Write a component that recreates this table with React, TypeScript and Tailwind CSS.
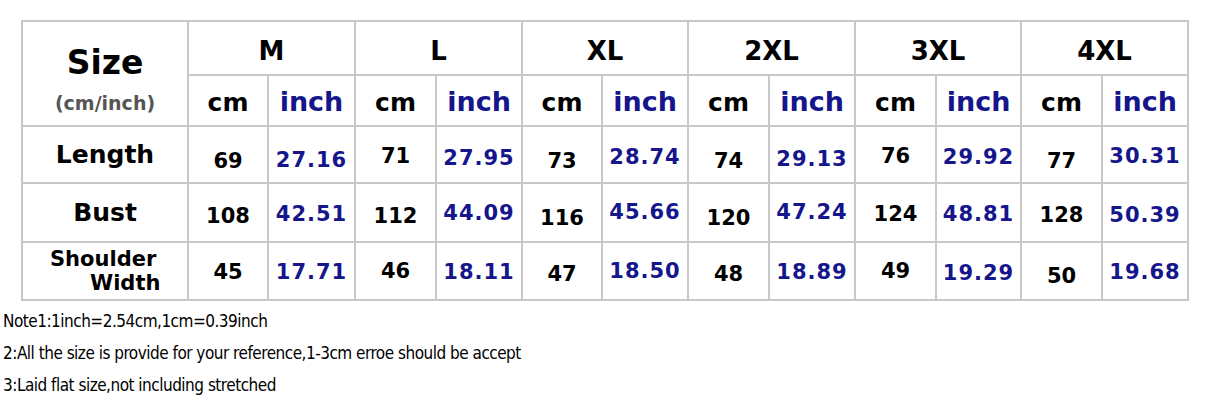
const sizes = ['M', 'L', 'XL', '2XL', '3XL', '4XL'];

// shift = how far the value sits below the cell middle in the picture
const rows = [
  {
    label: 'Length',
    cm: ['69', '71', '73', '74', '76', '77'],
    cmShift: [5, 0, 5, 5, 0, 5],
    inch: ['27.16', '27.95', '28.74', '29.13', '29.92', '30.31'],
    inchShift: [5, 3, 2, 4, 2, 1]
  },
  {
    label: 'Bust',
    cm: ['108', '112', '116', '120', '124', '128'],
    cmShift: [2, 2, 4, 4, 0, 1],
    inch: ['42.51', '44.09', '45.66', '47.24', '48.81', '50.39'],
    inchShift: [1, 0, -1, -1, 1, 2]
  },
  {
    label: 'Shoulder',
    cm: ['45', '46', '47', '48', '49', '50'],
    cmShift: [0, -1, 2, 2, -1, 4],
    inch: ['17.71', '18.11', '18.50', '18.89', '19.29', '19.68'],
    inchShift: [1, 1, 0, 1, 2, 1]
  }
];

const padCm: Record<number, string> = {
  [-1]: 'pt-[2px]',
  0: 'pt-[4px]',
  1: 'pt-[6px]',
  2: 'pt-[8px]',
  3: 'pt-[10px]',
  4: 'pt-[12px]',
  5: 'pt-[14px]'
};

const padInch: Record<number, string> = {
  [-1]: 'pt-[0px]',
  0: 'pt-[2px]',
  1: 'pt-[4px]',
  2: 'pt-[6px]',
  3: 'pt-[8px]',
  4: 'pt-[10px]',
  5: 'pt-[12px]'
};

const colWidths = [166, 80, 87, 81, 86, 80, 86, 81, 86, 81, 85, 81, 86];
const rowHeights = ['h-[57px]', 'h-[59px]', 'h-[58px]'];

const cell = 'border-2 border-[#c8c8c8] text-center align-middle p-0';

export default function App() {
  return (
    <div className="w-[1232px] h-[415px] bg-white overflow-hidden font-['DejaVu_Sans',sans-serif]">
      <div className="pt-[20px] pl-[21px]">
        <table className="border-collapse table-fixed w-[1168px]">
          <colgroup>
            {colWidths.map((w, i) => (
              <col key={i} style={{ width: w }} />
            ))}
          </colgroup>
          <thead>
            <tr className="h-[54px]">
              <th rowSpan={2} className={cell}>
                <div className="text-[33px] font-bold leading-none text-black pt-[12px]">Size</div>
                <div className="text-[19px] font-bold text-[#555] leading-none mt-[15px]">(cm/inch)</div>
              </th>
              {sizes.map((s) => (
                <th key={s} colSpan={2} className={`${cell} text-[26px] font-bold text-black pt-[6px]`}>
                  {s}
                </th>
              ))}
            </tr>
            <tr className="h-[51px]">
              {sizes.map((s) => (
                <>
                  <th key={s + 'cm'} className={`${cell} text-[25px] font-bold text-black pt-[4px]`}>cm</th>
                  <th key={s + 'in'} className={`${cell} text-[27px] font-bold text-[#15158c] pt-[4px]`}>inch</th>
                </>
              ))}
            </tr>
          </thead>
          <tbody>
            {rows.map((r, ri) => (
              <tr key={r.label} className={rowHeights[ri]}>
                <td className={`${cell} font-bold text-black`}>
                  {r.label === 'Shoulder' ? (
                    <div className="text-[21px] leading-[24px] text-left pl-[27px]">
                      <div>Shoulder</div>
                      <div className="pl-[40px]">Width</div>
                    </div>
                  ) : (
                    <span className="text-[25px]">{r.label}</span>
                  )}
                </td>
                {sizes.map((s, i) => (
                  <>
                    <td key={s + 'c'} className={`${cell} text-[21px] font-bold text-black ${padCm[r.cmShift[i]]}`}>
                      {r.cm[i]}
                    </td>
                    <td key={s + 'i'} className={`${cell} text-[21px] font-bold text-[#15158c] tracking-[1px] ${padInch[r.inchShift[i]]}`}>
                      {r.inch[i]}
                    </td>
                  </>
                ))}
              </tr>
            ))}
          </tbody>
        </table>
      </div>
      <div className="pl-[3px] pt-[4px] text-[17px] tracking-[-0.5px] text-black leading-[32px] font-['DejaVu_Sans_Condensed','DejaVu_Sans',sans-serif]">
        <div>Note1:1inch=2.54cm,1cm=0.39inch</div>
        <div>2:All the size is provide for your reference,1-3cm erroe should be accept</div>
        <div>3:Laid flat size,not including stretched</div>
      </div>
    </div>
  );
}
